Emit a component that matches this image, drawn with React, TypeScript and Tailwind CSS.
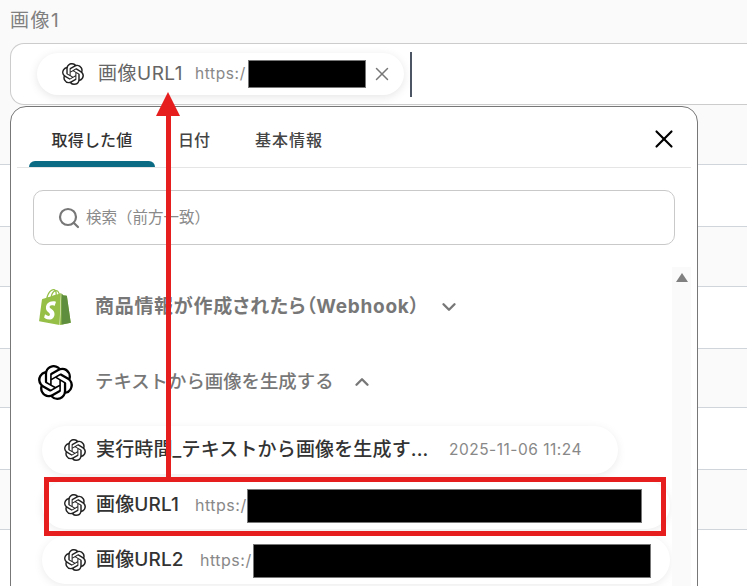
import { SiOpenai, SiShopify } from "react-icons/si";
import { ChevronDown, ChevronUp, Search, X } from "lucide-react";

const font = "font-['Inter','Noto_Sans_CJK_JP',sans-serif]";
const bgRows = [
  "h-[60px] bg-[#fafafa]",
  "h-[62px] bg-white",
  "h-[60px] bg-[#fafafa]",
  "h-[62px] bg-white",
  "h-[59px] bg-[#fafafa]",
  "h-[62px] bg-white",
  "h-[60px] bg-[#fafafa]",
  "h-[57px] bg-white",
];

function ValueRow({ name, width, children, nameWidth }: { name: string; width: string; nameWidth: string; children: React.ReactNode }) {
  return (
    <div className={`flex h-12 items-center rounded-full bg-white pl-[22px] shadow-[0_2px_10px_rgba(0,0,0,0.08)] ${width}`}>
      <SiOpenai className="h-[22px] w-[22px] shrink-0 text-[#222]" />
      <span className={`ml-[10px] shrink-0 text-[19px] font-medium tracking-[0.15px] whitespace-nowrap text-[#333] ${nameWidth}`}>{name}</span>
      {children}
    </div>
  );
}

export default function App() {
  return (
    <div className={`relative h-[586px] w-[747px] overflow-hidden bg-[#fafafa] ${font}`}>
      <div className="h-[43px] pt-[9px] pl-[10px] text-[19px] leading-6 tracking-[1.5px] text-[#808080]">画像1</div>

      <div className="ml-[10px] flex h-[62px] items-center rounded-l-[14px] border border-r-0 border-[#cccccc] bg-white pl-[26px]">
        <div className="flex h-[42px] w-[367px] items-center rounded-full bg-white pl-[25px] shadow-[0_2px_10px_rgba(0,0,0,0.1)]">
          <SiOpenai className="h-[22px] w-[22px] shrink-0 text-[#222]" />
          <span className="ml-[14px] w-[97px] shrink-0 text-[19px] tracking-[0.5px] whitespace-nowrap text-[#666]">画像URL1</span>
          <span className="w-[53px] shrink-0 text-[15.5px] tracking-[0.6px] text-[#888]">https:/</span>
          <span className="h-[28px] w-[118px] shrink-0 border border-[#777] bg-black" />
          <X className="ml-[5px] h-[22px] w-[22px] shrink-0 text-[#777]" strokeWidth={1.6} />
        </div>
        <div className="ml-[6px] h-[45px] w-[2px] bg-[#4b5563]" />
      </div>

      <div>
        {bgRows.map((cls, i) => (
          <div key={i} className={`border-b border-[#d0d5dc] ${cls}`} />
        ))}
      </div>

      {/* picker panel */}
      <div className="absolute top-[106px] left-[10px] h-[500px] w-[688px] rounded-[16px] border border-[#777] bg-white">
        <div className="mx-[6px] flex h-[61px] border-b border-[#e5e5e5]">
          <div className="ml-[12px] flex h-[60px] w-[126px] flex-col">
            <div className="flex flex-1 items-center justify-center pt-[11px] text-[16px] font-medium tracking-[0.2px] text-[#333]">取得した値</div>
            <div className="h-[6px] rounded-t-[6px] bg-[#0b6b85]" />
          </div>
          <div className="ml-[23px] flex h-[60px] items-center pt-[5px] text-[16px] font-medium text-[#444]">日付</div>
          <div className="ml-[45px] flex h-[60px] items-center pt-[5px] text-[16px] font-medium tracking-[1px] text-[#444]">基本情報</div>
          <X className="mt-[17px] mr-[12px] ml-auto h-[30px] w-[30px] text-black" strokeWidth={1.7} />
        </div>

        <div className="mx-[22px] mt-[22px] flex h-[55px] w-[642px] items-center rounded-[10px] border border-[#c9c9c9] pl-[23px]">
          <Search className="h-[24px] w-[24px] text-[#777]" strokeWidth={2.2} />
          <span className="ml-[5px] text-[15.5px] text-[#8a8a8a]">検索（前方一致）</span>
        </div>

        <div className="absolute top-[160px] right-[6px] bottom-0 w-[19px] bg-[#fafafa]">
          <div className="mx-auto mt-[6px] h-0 w-0 border-x-[6px] border-b-[9px] border-x-transparent border-b-[#808080]" />
        </div>

        <div className="mt-[44px] ml-[26px] flex h-[36px] items-center">
          <div className="relative h-[38px] w-[36px]">
            <SiShopify className="absolute inset-0 h-[38px] w-[36px] text-[#95bf47]" />
            <SiShopify className="absolute inset-0 h-[38px] w-[36px] text-[#5e8e3e] [clip-path:polygon(68%_0,100%_0,100%_100%,68%_100%)]" />
          </div>
          <span className="ml-[22px] text-[19px] font-bold tracking-[0.7px] whitespace-nowrap text-[#777] [font-feature-settings:'palt']">商品情報が作成されたら（Webhook）</span>
          <ChevronDown className="ml-[18px] h-[22px] w-[22px] text-[#777]" strokeWidth={2.6} />
        </div>

        <div className="mt-[39px] ml-[27px] flex h-[36px] items-center">
          <SiOpenai className="h-[35px] w-[35px] text-black" />
          <span className="ml-[22px] text-[18.4px] font-medium whitespace-nowrap text-[#777]">テキストから画像を生成する</span>
          <ChevronUp className="ml-[17px] h-[22px] w-[22px] text-[#777]" strokeWidth={2.6} />
        </div>

        <div className="mt-[26px] ml-[31px] flex flex-col gap-[7px]">
          <ValueRow name="実行時間_テキストから画像を生成す..." width="w-[576px]" nameWidth="w-[353px]">
            <span className="text-[15.5px] tracking-[0.5px] text-[#888]">2025-11-06 11:24</span>
          </ValueRow>
          <ValueRow name="画像URL1" width="w-[628px]" nameWidth="w-[99px]">
            <span className="w-[52px] shrink-0 text-[16px] tracking-[0.5px] text-[#888]">https:/</span>
            <span className="mt-[2px] h-[34px] w-[395px] shrink-0 border border-[#777] bg-black" />
          </ValueRow>
          <ValueRow name="画像URL2" width="w-[628px]" nameWidth="w-[104px]">
            <span className="w-[53px] shrink-0 text-[16px] tracking-[0.5px] text-[#888]">https:/</span>
            <span className="mt-[2px] h-[34px] w-[398px] shrink-0 border border-[#777] bg-black" />
          </ValueRow>
        </div>
      </div>

      {/* red annotation */}
      <div className="absolute top-[477px] left-[44px] h-[59px] w-[622px] border-[5px] border-[#e61e1e]" />
      <svg className="absolute top-[90px] left-[150px]" width="36" height="390" viewBox="0 0 36 390">
        <path d="M18 2 L30 26 L6 26 Z" fill="#e61e1e" />
        <rect x="16" y="25" width="5" height="363" fill="#e61e1e" />
      </svg>
    </div>
  );
}
